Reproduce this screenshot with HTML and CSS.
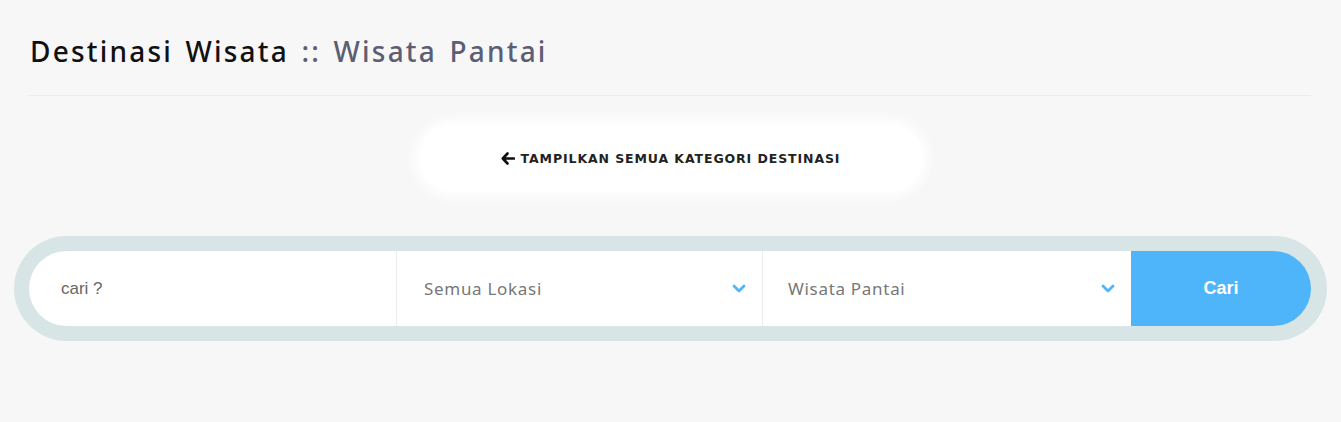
FILE: index.html
```html
<!DOCTYPE html>
<html lang="id">
<head>
<meta charset="utf-8">
<title>Destinasi Wisata</title>
<link rel="stylesheet" href="styles.css">
</head>
<body>
<div class="page">
  <h1 class="title">Destinasi Wisata <span class="sub">:: Wisata Pantai</span></h1>
  <hr class="divider">
  <div class="back-wrap">
    <a class="back-btn" href="#">
      <svg class="arrow" width="14" height="13" viewBox="0 0 14 13"><path d="M6.5 1.5 L1.8 6.5 L6.5 11.5 M2 6.5 H13" fill="none" stroke="#111" stroke-width="2.6" stroke-linecap="round" stroke-linejoin="round"/></svg>
      TAMPILKAN SEMUA KATEGORI DESTINASI
    </a>
  </div>
  <form class="search">
    <div class="field input-field"><span class="placeholder">cari ?</span></div>
    <div class="field select-field"><span>Semua Lokasi</span>
      <svg class="chev" width="14" height="9" viewBox="0 0 14 9"><path d="M2 2 L7 7 L12 2" fill="none" stroke="#4fb5fa" stroke-width="2.8" stroke-linecap="round" stroke-linejoin="round"/></svg>
    </div>
    <div class="field select-field last"><span>Wisata Pantai</span>
      <svg class="chev" width="14" height="9" viewBox="0 0 14 9"><path d="M2 2 L7 7 L12 2" fill="none" stroke="#4fb5fa" stroke-width="2.8" stroke-linecap="round" stroke-linejoin="round"/></svg>
    </div>
    <button class="submit" type="button">Cari</button>
  </form>
</div>
</body>
</html>
```
FILE: styles.css
```css
html, body {
  margin: 0;
  padding: 0;
  background: #f7f7f7;
}
body {
  font-family: "Noto Sans", "Open Sans", sans-serif;
}
.page {
  padding: 26px 30px 0 29px;
}
.title {
  margin: 0;
  font-family: "Noto Sans", sans-serif;
  font-weight: 500;
  font-size: 28px;
  line-height: 50px;
  letter-spacing: 2.2px;
  word-spacing: 3px;
  color: #111;
  padding-left: 1px;
}
.title .sub {
  color: #5c5e73;
}
.divider {
  margin: 19px 0 0 0;
  border: 0;
  height: 1px;
  background: #ececec;
}
.back-wrap {
  display: flex;
  justify-content: center;
  padding: 28px 0 0 0;
}
.back-btn {
  display: flex;
  align-items: center;
  justify-content: center;
  gap: 6px;
  width: 504px;
  height: 68px;
  margin-left: 1px;
  background: #fff;
  border-radius: 34px;
  box-shadow: 0 0 10px 6px #fefefe;
  text-decoration: none;
  color: #222;
  font-family: "DejaVu Sans", sans-serif;
  font-weight: bold;
  font-size: 12.5px;
  letter-spacing: 0.9px;
}
.arrow {
  display: block;
}
.search {
  display: flex;
  margin: 44px -16px 0 -15px;
  padding: 15px;
  background: #d7e5e6;
  border-radius: 53px;
  height: 75px;
}
.field {
  display: flex;
  align-items: center;
  background: #fff;
  height: 75px;
  box-sizing: border-box;
  font-size: 17px;
  color: #777;
}
.input-field {
  width: 368px;
  border-radius: 38px 0 0 38px;
  padding-left: 32px;
  border-right: 1px solid #ececec;
  font-family: "Liberation Sans", Arial, sans-serif;
}
.input-field .placeholder {
  color: #666;
}
.select-field {
  width: 366px;
  padding: 0 16px 0 27px;
  justify-content: space-between;
  border-right: 1px solid #ececec;
  font-family: "Noto Sans", sans-serif;
  letter-spacing: 0.7px;
}
.select-field.last {
  width: 368px;
  padding-left: 25px;
  border-right: 0;
}
.chev {
  display: block;
}
.submit {
  width: 180px;
  height: 75px;
  border: 0;
  background: #4fb5fa;
  color: #fff;
  border-radius: 0 38px 38px 0;
  font-family: "Liberation Sans", Arial, sans-serif;
  font-size: 18px;
  font-weight: 600;
  padding: 0;
}
```
